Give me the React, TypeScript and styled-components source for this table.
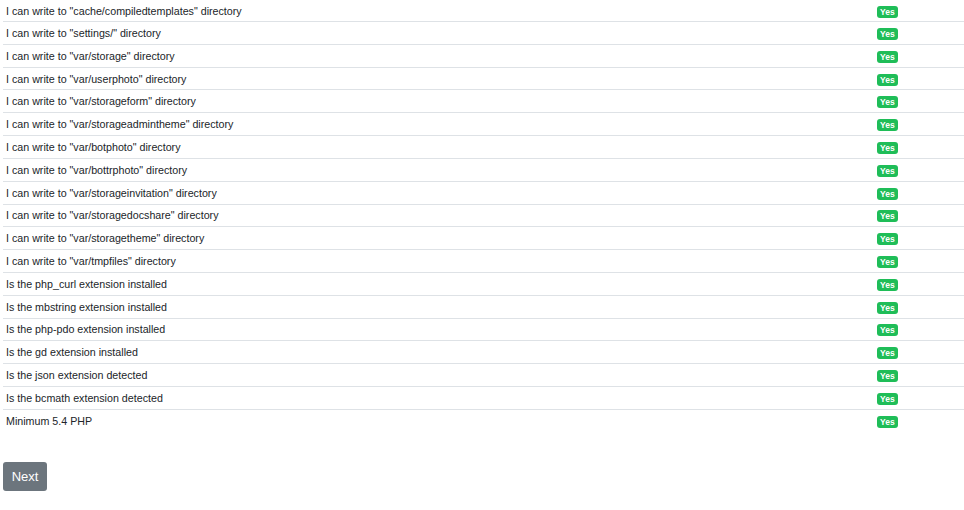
import React from "react";
import styled, { createGlobalStyle } from "styled-components";

const Global = createGlobalStyle`
  html, body { margin: 0; padding: 0; background: #fff; }
  body { font-family: "Liberation Sans", Arial, sans-serif; color: #212529; }
`;

const Page = styled.div`
  padding: 0 0 0 3px;
`;

const List = styled.div`
  width: 961px;
  font-size: 10.7px;
`;

const Row = styled.div<{ $first?: boolean }>`
  box-sizing: border-box;
  display: flex;
  align-items: center;
  height: ${(p) => (p.$first ? "21px" : "22.82px")};
  border-top: ${(p) => (p.$first ? "none" : "1px solid #dee2e6")};
`;

const Label = styled.div`
  flex: 1;
  padding: 0 3px;
  line-height: 14px;
`;

const Status = styled.div`
  width: 84px;
  padding: 0 3px;
  display: flex;
  align-items: center;
`;

const Badge = styled.span`
  display: inline-block;
  background: #1fbd58;
  color: #fff;
  font-size: 8.5px;
  font-weight: 700;
  line-height: 12px;
  height: 12px;
  padding: 0 3px;
  border-radius: 3px;
  position: relative;
  top: 1px;
`;

const Next = styled.button`
  margin-top: 30px;
  background: #6c757d;
  color: #fff;
  border: none;
  border-radius: 3px;
  font-family: "Liberation Sans", Arial, sans-serif;
  font-size: 13px;
  height: 29px;
  width: 44px;
  padding: 0;
  display: block;
`;

const items = [
  'I can write to "cache/compiledtemplates" directory',
  'I can write to "settings/" directory',
  'I can write to "var/storage" directory',
  'I can write to "var/userphoto" directory',
  'I can write to "var/storageform" directory',
  'I can write to "var/storageadmintheme" directory',
  'I can write to "var/botphoto" directory',
  'I can write to "var/bottrphoto" directory',
  'I can write to "var/storageinvitation" directory',
  'I can write to "var/storagedocshare" directory',
  'I can write to "var/storagetheme" directory',
  'I can write to "var/tmpfiles" directory',
  "Is the php_curl extension installed",
  "Is the mbstring extension installed",
  "Is the php-pdo extension installed",
  "Is the gd extension installed",
  "Is the json extension detected",
  "Is the bcmath extension detected",
  "Minimum 5.4 PHP",
];

export default function App() {
  return (
    <Page>
      <Global />
      <List>
        {items.map((t, i) => (
          <Row key={i} $first={i === 0}>
            <Label>{t}</Label>
            <Status>
              <Badge>Yes</Badge>
            </Status>
          </Row>
        ))}
      </List>
      <Next>Next</Next>
    </Page>
  );
}
